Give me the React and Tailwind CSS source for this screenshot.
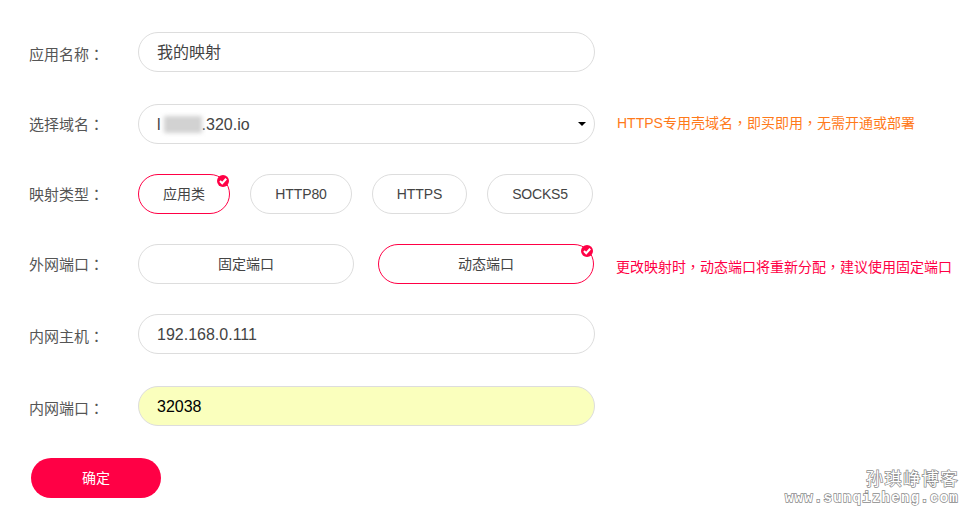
const font = { fontFamily: '"Liberation Sans", "Noto Sans CJK SC", sans-serif' };
const tc = { fontFamily: '"Noto Sans CJK TC", sans-serif' };

// full-width punctuation sits centred in the cell in the reference, the TC face does that
function P({ children }) {
  return <span style={tc}>{children}</span>;
}

function Label({ children, className = '' }) {
  return (
    <div className={`w-[109px] shrink-0 text-[15px] text-[#555] ${className}`}>
      {children}
      <P>：</P>
    </div>
  );
}

function Check() {
  return (
    <svg className="absolute right-0 top-0" width="12" height="12" viewBox="0 0 12 12">
      <circle cx="6" cy="6" r="6" fill="#ff0045" />
      <path d="M3 6 L5.2 8.2 L9.2 3.7" fill="none" stroke="#fff" strokeWidth="2.1" />
    </svg>
  );
}

function Pill({ children, active, className = '' }) {
  return (
    <div
      className={`relative flex h-10 items-center justify-center rounded-[20px] border text-sm text-[#444] ${
        active ? 'border-[#ff0045]' : 'border-[#ddd]'
      } ${className}`}
    >
      {children}
      {active && <Check />}
    </div>
  );
}

export default function App() {
  return (
    <div className="relative h-[519px] w-[969px] overflow-hidden bg-white pl-[29px] pt-[32px]" style={font}>
      <div className="flex h-10 items-center">
        <Label className="pt-[6px]">应用名称</Label>
        <div className="flex h-10 w-[457px] items-center rounded-[20px] border border-[#ddd] pl-[18px] pt-[2px] text-base text-[#444]">
          我的映射
        </div>
      </div>

      <div className="mt-[32px] flex h-10 items-center">
        <Label className="pt-[2px]">选择域名</Label>
        <div className="flex h-10 w-[457px] items-center rounded-[20px] border border-[#ddd] pl-[18px] pr-[8px] text-base text-[#444]">
          <span className="pt-[2px]">l</span>
          <span className="ml-[3px] h-[17px] w-[38px] bg-[#d2d2d2] blur-[2px]" />
          <span className="pt-[2px]">.320.io</span>
          <span className="ml-auto h-0 w-0 border-x-[4px] border-t-[4px] border-x-transparent border-t-black" />
        </div>
        <div className="ml-[22px] pb-[4px] text-sm text-[#ff7a1a]">
          HTTPS专用壳域名<P>，</P>即买即用<P>，</P>无需开通或部署
        </div>
      </div>

      <div className="mt-[30px] flex h-10 items-center">
        <Label className="pt-[2px]">映射类型</Label>
        <div className="flex">
          <Pill active className="w-[92px]">应用类</Pill>
          <Pill className="ml-[20px] w-[102px] tracking-[-0.1px]">HTTP80</Pill>
          <Pill className="ml-[20px] w-[95px] tracking-[-0.1px]">HTTPS</Pill>
          <Pill className="ml-[20px] w-[106px] tracking-[-0.2px]">SOCKS5</Pill>
        </div>
      </div>

      <div className="mt-[30px] flex h-10 items-center">
        <Label className="pt-[2px]">外网端口</Label>
        <div className="flex">
          <Pill className="w-[216px]">固定端口</Pill>
          <Pill active className="ml-[24px] w-[216px]">动态端口</Pill>
        </div>
        <div className="ml-[22px] pt-[4px] text-sm text-[#ff0045]">
          更改映射时<P>，</P>动态端口将重新分配<P>，</P>建议使用固定端口
        </div>
      </div>

      <div className="mt-[30px] flex h-10 items-center">
        <Label className="pt-[6px]">内网主机</Label>
        <div className="flex h-10 w-[457px] items-center rounded-[20px] border border-[#ddd] pl-[18px] pt-[2px] text-base text-[#444]">
          192.168.0.111
        </div>
      </div>

      <div className="mt-[32px] flex h-10 items-center">
        <Label className="pt-[6px]">内网端口</Label>
        <div className="flex h-10 w-[457px] items-center rounded-[20px] border border-[#ddd] bg-[#faffbd] pl-[18px] pt-[2px] text-base text-black">
          32038
        </div>
      </div>

      <button className="ml-[2px] mt-[32px] flex h-10 w-[130px] items-center justify-center rounded-[20px] bg-[#ff0045] text-sm text-white">
        确定
      </button>

      {/* watermark sits over the page */}
      <div className="absolute right-[10px] top-[467px] text-right text-white [-webkit-text-stroke:1.4px_#8a8a8a] [paint-order:stroke_fill]">
        <div className="text-[17px] leading-[22px] tracking-[1.6px]" style={{ fontFamily: '"Noto Sans CJK SC", serif' }}>孙琪峥博客</div>
        <div className="text-[14px] font-bold leading-[18px] tracking-[1.27px]" style={{ fontFamily: '"Liberation Mono", monospace' }}>www.sunqizheng.com</div>
      </div>
    </div>
  );
}
